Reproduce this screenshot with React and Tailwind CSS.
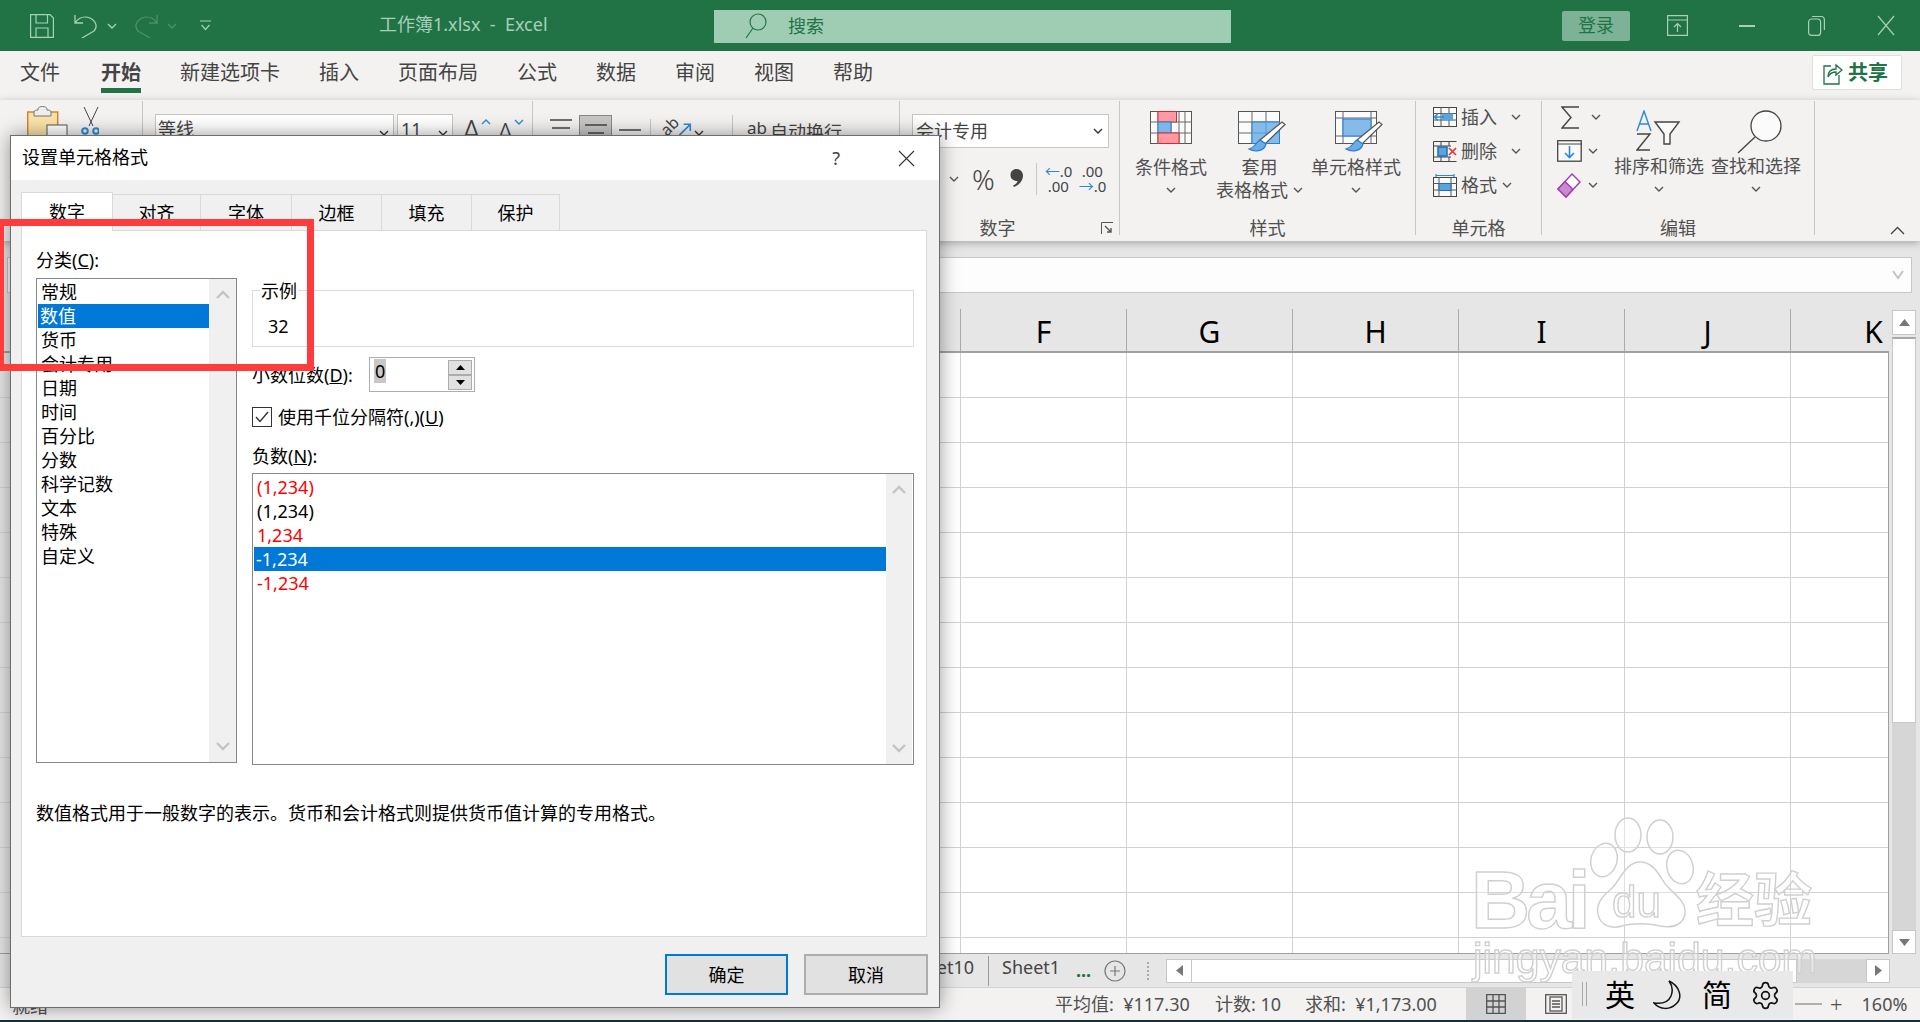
import React from "react";
import { Settings } from "lucide-react";

const Chev = ({ c = "#555", up = false, className = "" }) => (
  <svg width="10" height="6" viewBox="0 0 10 6" className={`shrink-0 ${className}`} fill="none" stroke={c} strokeWidth="1.4">
    <path d={up ? "M1 5L5 1L9 5" : "M1 1L5 5L9 1"} />
  </svg>
);

const Brush = () => (
  <g>
    <path d="M44 11L47 13.5L27 33L22 29Z" fill="#fff" stroke="#555" strokeWidth="1.2" />
    <path d="M22 29C18 31 18 36 11 38C16 41 26 41 28 33Z" fill="#6aaee3" stroke="#2b7cd3" strokeWidth="1.2" />
  </g>
);

const CondIcon = () => (
  <svg width="42" height="33" viewBox="0 0 42 33">
    <rect x="0.5" y="0.5" width="41" height="32" fill="#fbfbfb" stroke="#555" />
    <path d="M0 11H42M0 22H42M8 0V33M21 0V33M29 0V33M35 0V33" stroke="#666" />
    <rect x="8" y="0.5" width="18.5" height="10.5" fill="#ff9aa5" stroke="#d92b2b" />
    <rect x="8" y="11" width="13" height="11" fill="#7db7e8" stroke="#2b7cd3" />
    <rect x="8" y="22" width="21" height="10.5" fill="#ff9aa5" stroke="#d92b2b" />
  </svg>
);

const TableIcon = () => (
  <svg width="48" height="42" viewBox="0 0 48 42">
    <rect x="0.5" y="0.5" width="41" height="32" fill="#fbfbfb" stroke="#555" />
    <path d="M0 11H42M0 22H42M14 0V33M28 0V33" stroke="#666" />
    <rect x="14" y="11" width="27.5" height="21.5" fill="#84bbe9" stroke="#2b7cd3" />
    <path d="M28 11V33M14 22H42" stroke="#5a9bd8" />
    <Brush />
  </svg>
);

const StyleIcon = () => (
  <svg width="48" height="42" viewBox="0 0 48 42">
    <rect x="0.5" y="0.5" width="41" height="32" fill="#fbfbfb" stroke="#555" />
    <path d="M0 7H42M0 25H42M8 0V33M36 0V33" stroke="#666" />
    <rect x="8" y="8" width="28" height="17" fill="#84bbe9" stroke="#2b7cd3" />
    <Brush />
  </svg>
);

const InsertIcon = () => (
  <svg width="24" height="20" viewBox="0 0 24 20">
    <rect x="0.5" y="0.5" width="23" height="19" fill="#fafafa" stroke="#444" />
    <path d="M0 6.5H24M0 13H24M8 0V20M16 0V20" stroke="#555" />
    <rect x="9" y="6.5" width="11" height="7" fill="#5ba3dc" />
    <path d="M11 10H2M5 6.5L1.5 10L5 13.5" fill="none" stroke="#2b8ad6" strokeWidth="1.5" />
  </svg>
);

const DeleteIcon = () => (
  <svg width="24" height="21" viewBox="0 0 24 21">
    <path d="M0.5 0.5H23.5M0.5 20.5H23.5M0.5 0.5V20.5M8 0V5M16 0V5M8 16V21M16 16V21M0 5H18M0 16H18" stroke="#444" fill="none" />
    <rect x="5" y="6" width="9" height="9" fill="#5ba3dc" stroke="#1e6fb8" strokeWidth="1.5" />
    <path d="M16 7L23 14M23 7L16 14" stroke="#e8333a" strokeWidth="1.7" />
  </svg>
);

const FormatIcon = () => (
  <svg width="24" height="23" viewBox="0 0 24 23">
    <path d="M3 1.5H21M3 0V3M21 0V3" stroke="#2b8ad6" strokeWidth="1.2" />
    <rect x="0.5" y="3.5" width="23" height="19" fill="#fafafa" stroke="#444" />
    <path d="M0 9.5H24M0 16H24M6 3V23M18 3V23" stroke="#555" />
    <rect x="6" y="9.5" width="12" height="7" fill="#5ba3dc" stroke="#1e6fb8" />
  </svg>
);

const Launcher = () => (
  <svg width="13" height="13" viewBox="0 0 13 13" fill="none" stroke="#555">
    <path d="M0.5 12V0.5H12" />
    <path d="M4 4L10 10M10 6V10H6" strokeWidth="1.4" />
  </svg>
);

function TitleBar() {
  return (
    <div className="h-[51px] shrink-0 bg-[#217346] flex items-center text-[#a6d0b8] pl-[30px]">
      <svg width="24" height="24" viewBox="0 0 24 24" fill="none" stroke="#a6d0b8" strokeWidth="1.2" className="shrink-0">
        <path d="M0.6 0.6H20L23.4 4V23.4H0.6Z" />
        <path d="M6 0.6V9H17.5V0.6M6 23.4V14H18V23.4" />
      </svg>
      <svg width="24" height="24" viewBox="0 0 24 24" fill="none" stroke="#a6d0b8" strokeWidth="1.3" className="ml-[20px] shrink-0">
        <path d="M1 1V9H9M1 9C5 3 11 2 16 4C22 7 24 13 20 17L8 24" />
      </svg>
      <Chev c="#a6d0b8" className="ml-[9px]" />
      <svg width="24" height="24" viewBox="0 0 24 24" fill="none" stroke="#4f8f6b" strokeWidth="1.3" className="ml-[17px] shrink-0">
        <path d="M23 1V9H15M23 9C19 3 13 2 8 4C2 7 0 13 4 17L16 24" />
      </svg>
      <Chev c="#4f8f6b" className="ml-[9px]" />
      <svg width="11" height="11" viewBox="0 0 11 11" fill="none" stroke="#a6d0b8" strokeWidth="1.2" className="ml-[23px] shrink-0">
        <path d="M0 1H11M1.5 5L5.5 9.5L9.5 5" />
      </svg>
      <div className="ml-[168px] w-[170px] -mt-[3px] shrink-0 text-[18px] leading-[24px] whitespace-nowrap">工作簿1.xlsx&nbsp; -&nbsp; Excel</div>
      <div className="ml-[165px] w-[517px] h-[33px] mt-[1px] shrink-0 bg-[#9fcdb3] flex items-center pl-[31px] text-[#217346] text-[18px]">
        <svg width="22" height="26" viewBox="0 0 22 26" fill="none" stroke="#217346" strokeWidth="1.2">
          <circle cx="13" cy="9" r="8" />
          <path d="M8 15L1 25" />
        </svg>
        <span className="ml-[21px]">搜索</span>
      </div>
      <div className="ml-[331px] w-[68px] h-[30px] shrink-0 rounded-[2px] bg-[#7cb396] text-[#217346] text-[18px] flex items-center justify-center">登录</div>
      <svg width="21" height="21" viewBox="0 0 21 21" fill="none" stroke="#a6d0b8" strokeWidth="1.2" className="ml-[37px] shrink-0">
        <path d="M0.6 0.6H20.4V20.4H0.6ZM0.6 5H20.4M10.5 17V9M7 12L10.5 8.5L14 12" />
      </svg>
      <div className="ml-[51px] w-[16px] h-[2px] shrink-0 bg-[#a6d0b8]" />
      <svg width="17" height="21" viewBox="0 0 17 21" fill="none" stroke="#a6d0b8" strokeWidth="1.2" className="ml-[53px] shrink-0">
        <rect x="0.6" y="4" width="12" height="16.4" rx="3" />
        <path d="M4 1.5H13C15 1.5 16.4 3 16.4 5V15" />
      </svg>
      <svg width="18" height="21" viewBox="0 0 18 21" fill="none" stroke="#a6d0b8" strokeWidth="1.2" className="ml-[52px] shrink-0">
        <path d="M1 1L17 20M17 1L1 20" />
      </svg>
    </div>
  );
}

function TabRow() {
  return (
    <div className="h-[49px] shrink-0 bg-[#f3f2f1] flex text-[20px] leading-[24px] text-[#444] pl-[20px]">
      <div className="mt-[10px]">文件</div>
      <div className="mt-[10px] ml-[41px] flex flex-col font-bold">
        <span>开始</span>
        <span className="block mt-[3px] h-[5px] bg-[#217346]" />
      </div>
      <div className="mt-[10px] ml-[39px]">新建选项卡</div>
      <div className="mt-[10px] ml-[39px]">插入</div>
      <div className="mt-[10px] ml-[39px]">页面布局</div>
      <div className="mt-[10px] ml-[39px]">公式</div>
      <div className="mt-[10px] ml-[39px]">数据</div>
      <div className="mt-[10px] ml-[39px]">审阅</div>
      <div className="mt-[10px] ml-[39px]">视图</div>
      <div className="mt-[10px] ml-[39px]">帮助</div>
      <div className="ml-auto mr-[18px] mt-[4px] w-[90px] h-[35px] bg-white border border-[#e1dfdd] rounded-[2px] flex items-center pl-[10px] text-[#217346] font-bold">
        <svg width="20" height="24" viewBox="0 0 20 24" fill="none" stroke="#217346" strokeWidth="1.3">
          <path d="M8 5H1V23H16V14" />
          <path d="M5 16C5 10 9 8 13 8V4L19 9L13 14V11C10 11 7 12 5 16Z" />
        </svg>
        <span className="ml-[5px]">共享</span>
      </div>
    </div>
  );
}

const BigBtn = ({ icon, lines, w, chevInline }) => (
  <div className={`${w} flex flex-col items-center pt-[10px] text-[18px] text-[#505050] shrink-0`}>
    <div className="h-[44px]">{icon}</div>
    <div className="h-[24px] leading-[24px] whitespace-nowrap">{lines}</div>
    {chevInline ? (
      <div className="h-[22px] leading-[22px] flex items-center whitespace-nowrap">
        {chevInline}
        <Chev className="ml-[5px]" />
      </div>
    ) : (
      <div className="h-[22px] flex items-center">
        <Chev />
      </div>
    )}
  </div>
);

const GroupLabel = ({ children }) => (
  <div className="h-[28px] shrink-0 leading-[28px] text-[18px] text-[#505050] text-center whitespace-nowrap">{children}</div>
);

const CellRow = ({ icon, text, chevClass }) => (
  <div className="h-[34px] flex items-center text-[18px] text-[#505050]">
    <div className="w-[24px] flex justify-center shrink-0">{icon}</div>
    <span className="ml-[4px]">{text}</span>
    <Chev className={chevClass} />
  </div>
);

function Ribbon() {
  return (
    <div className="h-[141px] shrink-0 bg-[#f3f2f1] flex relative z-10 shadow-[0_2px_8px_rgba(0,0,0,0.28)] pt-[1px]">
      {/* clipboard */}
      <div className="w-[143px] h-[134px] border-r border-[#c8c6c4] shrink-0 flex items-start pt-[5px] pl-[27px]">
        <svg width="72" height="40" viewBox="0 0 72 40" fill="none">
          <rect x="0.7" y="6" width="30" height="32" fill="#fbe3a8" stroke="#d9822b" strokeWidth="1.5" />
          <path d="M7 6C7 4 10 4 11 4C11 1 13 0.5 15.5 0.5C18 0.5 20 1 20 4C21 4 24 4 24 6V10H7Z" fill="#eee" stroke="#777" />
          <rect x="20" y="19" width="20" height="20" fill="#fff" stroke="#555" />
          <path d="M57 1L66 20M71 1L62 20" stroke="#444" />
          <circle cx="58" cy="25" r="2.8" stroke="#2b8ad6" strokeWidth="2" />
          <circle cx="69" cy="25" r="2.8" stroke="#2b8ad6" strokeWidth="2" />
        </svg>
      </div>
      {/* font */}
      <div className="w-[390px] h-[134px] border-r border-[#c8c6c4] shrink-0 flex items-start pt-[13px] pl-[12px] text-[18px] text-[#444]">
        <div className="w-[239px] h-[34px] bg-white border border-[#c8c6c4] flex items-start justify-between pl-[2px] pr-[4px] pt-[2px] leading-[24px]">
          <span>等线</span>
          <Chev c="#333" className="mt-[13px]" />
        </div>
        <div className="ml-[3px] w-[56px] h-[34px] bg-white border border-[#c8c6c4] flex items-start justify-between pl-[3px] pr-[4px] pt-[2px] leading-[24px]">
          <span>11</span>
          <Chev c="#333" className="mt-[13px]" />
        </div>
        <div className="ml-[8px] flex items-start text-[34px] leading-[36px] font-light">
          <span>A</span>
          <Chev c="#2b8ad6" up className="mt-[5px] -ml-[1px]" />
          <span className="ml-[6px] text-[28px]">A</span>
          <Chev c="#2b8ad6" className="mt-[5px]" />
        </div>
      </div>
      {/* align */}
      <div className="w-[367px] h-[134px] border-r border-[#c8c6c4] shrink-0 flex items-start pl-[16px] pt-[14px]">
        <svg width="24" height="24" viewBox="0 0 24 24" stroke="#444" strokeWidth="1.5" className="mt-[4px] shrink-0">
          <path d="M1 1H23M3 9H21M1 17H23" />
        </svg>
        <div className="ml-[6px] w-[33px] h-[30px] shrink-0 bg-[#c8c6c4] border border-[#8a8886] flex justify-center pt-[8px]">
          <svg width="22" height="16" viewBox="0 0 22 16" stroke="#444" strokeWidth="1.5">
            <path d="M0 1H22M3 9H19" />
          </svg>
        </div>
        <svg width="24" height="24" viewBox="0 0 24 24" stroke="#444" strokeWidth="1.5" className="ml-[6px] mt-[10px] shrink-0">
          <path d="M1 5H23" />
        </svg>
        <div className="ml-[8px] mt-[4px] h-[30px] border-l border-[#c8c6c4]" />
        <div className="ml-[9px] mt-[1px] w-[32px] h-[24px] flex items-start shrink-0">
          <span className="inline-block text-[16px] leading-[20px] text-[#444] -rotate-45 origin-center">ab</span>
          <svg width="16" height="16" viewBox="0 0 16 16" fill="none" stroke="#2b8ad6" strokeWidth="1.7" className="ml-[-2px] mt-[6px]">
            <path d="M1 15L14 2M7 2H14V9" />
          </svg>
        </div>
        <Chev c="#333" className="ml-[2px] mt-[15px]" />
        <div className="ml-[28px] h-[34px] border-l border-[#c8c6c4]" />
        <div className="ml-[14px] flex items-start text-[18px] leading-[24px] text-[#444] mt-[5px]">
          <span className="leading-[18px] text-[17px] -mt-[1px]">ab</span>
          <span className="ml-[3px]">自动换行</span>
        </div>
      </div>
      {/* number */}
      <div className="w-[220px] h-[134px] border-r border-[#c8c6c4] shrink-0 flex flex-col">
        <div className="h-[113px] shrink-0 flex flex-col pl-[12px] pt-[13px]">
          <div className="w-[197px] h-[34px] bg-white border border-[#c8c6c4] flex items-center justify-between pl-[3px] pr-[5px] text-[18px] text-[#444]">
            <span>会计专用</span>
            <Chev c="#333" />
          </div>
          <div className="flex items-center h-[32px] mt-[15px] text-[#444]">
            <Chev className="ml-[37px]" />
            <span className="ml-[13px] text-[28px] leading-[32px] font-light">%</span>
            <svg width="13" height="18" viewBox="0 0 13 18" fill="#444" className="ml-[15px] -mt-[3px] shrink-0">
              <path d="M6.5 0C10.5 0 13 3 13 6.5C13 12 9 16 4 18L3 16.5C6 15 7.5 13.5 7.5 12C3 12 0.5 9.5 0.5 6C0.5 2.5 3 0 6.5 0Z" />
            </svg>
            <span className="ml-[13px] h-[32px] border-l border-[#c8c6c4]" />
            <div className="ml-[8px] w-[25px] text-[15px] leading-[15px] whitespace-nowrap">
              <div><span className="text-[#2b8ad6]">←</span>.0</div>
              <div className="pl-[3px]">.00</div>
            </div>
            <div className="ml-[9px] w-[25px] text-[15px] leading-[15px] whitespace-nowrap">
              <div className="pl-[3px]">.00</div>
              <div><span className="text-[#2b8ad6]">→</span>.0</div>
            </div>
          </div>
        </div>
        <div className="flex items-center">
          <div className="w-[195px]"><GroupLabel>数字</GroupLabel></div>
          <div className="ml-[6px]"><Launcher /></div>
        </div>
      </div>
      {/* styles */}
      <div className="w-[296px] h-[134px] border-r border-[#c8c6c4] shrink-0 flex flex-col">
        <div className="h-[113px] shrink-0 flex pl-[11px]">
          <BigBtn w="w-[80px]" icon={<CondIcon />} lines="条件格式" />
          <BigBtn w="w-[97px]" icon={<div className="ml-[5px]"><TableIcon /></div>} lines="套用" chevInline="表格格式" />
          <BigBtn w="w-[96px]" icon={<div className="ml-[5px]"><StyleIcon /></div>} lines="单元格样式" />
        </div>
        <GroupLabel>样式</GroupLabel>
      </div>
      {/* cells */}
      <div className="w-[126px] h-[134px] border-r border-[#c8c6c4] shrink-0 flex flex-col">
        <div className="h-[113px] shrink-0 pl-[17px] flex flex-col -mt-[1px]">
          <CellRow icon={<InsertIcon />} text="插入" chevClass="ml-[14px]" />
          <CellRow icon={<DeleteIcon />} text="删除" chevClass="ml-[14px]" />
          <CellRow icon={<FormatIcon />} text="格式" chevClass="ml-[5px]" />
        </div>
        <div className="mt-[1px]"><GroupLabel>单元格</GroupLabel></div>
      </div>
      {/* editing */}
      <div className="w-[273px] h-[134px] border-r border-[#c8c6c4] shrink-0 flex flex-col">
        <div className="h-[113px] shrink-0 flex pl-[15px]">
          <div className="w-[56px] flex flex-col shrink-0 -mt-[1px]">
            <div className="h-[34px] flex items-center pl-[4px]">
              <svg width="19" height="23" viewBox="0 0 19 23" fill="none" stroke="#444" strokeWidth="1.4">
                <path d="M18 1H1L10 11.5L1 22H18" />
              </svg>
              <Chev className="ml-[11px]" />
            </div>
            <div className="h-[34px] flex items-center">
              <svg width="25" height="22" viewBox="0 0 25 22" fill="none">
                <rect x="0.7" y="0.7" width="23.5" height="20.5" fill="#fafafa" stroke="#444" strokeWidth="1.3" />
                <path d="M0 4H25" stroke="#444" />
                <path d="M12.5 6V17M8 13L12.5 17.5L17 13" stroke="#2b8ad6" strokeWidth="1.6" />
              </svg>
              <Chev className="ml-[6px]" />
            </div>
            <div className="h-[34px] flex items-center">
              <svg width="24" height="25" viewBox="0 0 24 25" fill="none" stroke="#a03cb0" strokeWidth="1.4">
                <path d="M15 1L23 9L9 24L1 16Z" fill="#fff" />
                <path d="M8 8.5L16 16.5L9 24L1 16Z" fill="#c98ad2" />
              </svg>
              <Chev className="ml-[7px]" />
            </div>
          </div>
          <BigBtn
            w="w-[92px] -mt-[1px]"
            icon={
              <svg width="46" height="42" viewBox="0 0 46 42" fill="none">
                <path d="M1 21L8 1L15 21M3.5 14H12.5" stroke="#2b8ad6" strokeWidth="1.4" />
                <path d="M1 24H14L1 40H14" stroke="#444" strokeWidth="1.4" />
                <path d="M19 12H43L34 24V34H28V24Z" fill="#fafafa" stroke="#444" strokeWidth="1.4" />
              </svg>
            }
            lines="排序和筛选"
          />
          <BigBtn
            w="w-[96px] ml-[3px] -mt-[1px]"
            icon={
              <svg width="46" height="44" viewBox="0 0 46 44" fill="none" stroke="#444" strokeWidth="1.3" className="ml-[8px]">
                <circle cx="29" cy="16" r="15" fill="#fbfbfb" />
                <path d="M18 27L1 43" />
              </svg>
            }
            lines="查找和选择"
          />
        </div>
        <GroupLabel>编辑</GroupLabel>
      </div>
      <div className="flex-1 flex justify-end items-end pr-[15px] pb-[6px]">
        <svg width="15" height="9" viewBox="0 0 15 9" fill="none" stroke="#444" strokeWidth="1.3">
          <path d="M1 8L7.5 1.5L14 8" />
        </svg>
      </div>
    </div>
  );
}

const cols = ["A", "B", "C", "D", "E", "F", "G", "H", "I", "J", "K"];
const rows = Array.from({ length: 14 }, (_, i) => i);

function Grid() {
  return (
    <div className="flex h-[645px] shrink-0">
      <div className="w-[1889px] flex flex-col overflow-hidden shrink-0 border-b border-[#a0a0a0]">
        <div className="flex h-[44px] shrink-0 border-b-2 border-[#a0a0a0]">
          <div className="w-[131px] shrink-0" />
          {cols.map((c) => (
            <div key={c} className="w-[166px] shrink-0 border-r border-[#ababab] flex items-center justify-center text-[30px] leading-[40px] text-black pt-[3px]">
              {c}
            </div>
          ))}
        </div>
        <div className="flex-1 bg-white flex flex-col overflow-hidden border-r border-[#a0a0a0]">
          {rows.map((r) => (
            <div key={r} className="flex h-[45px] shrink-0 border-b border-[#d2d2d2]">
              <div className="w-[131px] shrink-0 bg-[#e6e6e6]" />
              {cols.map((c) => (
                <div key={c} className="w-[166px] shrink-0 border-r border-[#d2d2d2]" />
              ))}
            </div>
          ))}
        </div>
      </div>
      <div className="w-[31px] flex flex-col shrink-0 pl-[3px] pr-[4px] pt-[1px]">
        <div className="h-[25px] bg-white border border-[#c8c8c8] flex items-center justify-center shrink-0">
          <svg width="11" height="7" viewBox="0 0 11 7" fill="#777"><path d="M5.5 0L11 7H0Z" /></svg>
        </div>
        <div className="h-[386px] mt-[2px] bg-white border border-[#c8c8c8] border-t-[#a8a8a8] border-t-2 shrink-0" />
        <div className="flex-1 bg-[#d6d6d6]" />
        <div className="h-[24px] bg-white border border-[#c8c8c8] flex items-center justify-center shrink-0">
          <svg width="11" height="7" viewBox="0 0 11 7" fill="#777"><path d="M5.5 7L11 0H0Z" /></svg>
        </div>
      </div>
    </div>
  );
}

function SheetRow() {
  return (
    <div className="h-[33px] shrink-0 flex items-center text-[18px] text-[#444] leading-[24px]">
      <div className="w-[988px] shrink-0 flex justify-end pr-[14px] whitespace-nowrap -mt-[8px]">Sheet10</div>
      <div className="h-[30px] border-l border-[#999] shrink-0" />
      <div className="ml-[13px] w-[64px] whitespace-nowrap -mt-[8px]">Sheet1</div>
      <div className="ml-[10px] w-[26px] text-[#217346] font-bold leading-[24px] -mt-[2px]">...</div>
      <svg width="22" height="22" viewBox="0 0 22 22" fill="none" stroke="#777" strokeWidth="1.2" className="ml-[2px] shrink-0">
        <circle cx="11" cy="11" r="10" />
        <path d="M11 6V16M6 11H16" />
      </svg>
      <div className="ml-[21px] w-[2px] h-[18px] border-l-2 border-dotted border-[#aaa]" />
      <div className="ml-[17px] flex h-[24px] w-[724px] shrink-0">
        <div className="w-[26px] bg-white border border-[#c8c8c8] flex items-center justify-center">
          <svg width="7" height="11" viewBox="0 0 7 11" fill="#777"><path d="M0 5.5L7 0V11Z" /></svg>
        </div>
        <div className="w-[605px] bg-white border-y border-r border-[#c8c8c8]" />
        <div className="flex-1 bg-[#d6d6d6]" />
        <div className="w-[24px] bg-white border border-[#c8c8c8] flex items-center justify-center">
          <svg width="7" height="11" viewBox="0 0 7 11" fill="#777"><path d="M7 5.5L0 0V11Z" /></svg>
        </div>
      </div>
    </div>
  );
}

function StatusBar() {
  return (
    <div className="h-[33px] shrink-0 bg-[#f3f2f1] border-t border-[#d2d2d2] flex items-center text-[18px] text-[#505050] leading-[24px] pl-[12px]">
      <span className="w-[40px] mt-[3px]">就绪</span>
      <span className="ml-[1003px] whitespace-nowrap w-[138px]">平均值:&nbsp; ¥117.30</span>
      <span className="ml-[22px] whitespace-nowrap w-[67px]">计数: 10</span>
      <span className="ml-[23px] whitespace-nowrap w-[135px]">求和:&nbsp; ¥1,173.00</span>
      <div className="ml-[26px] w-[60px] h-full bg-[#d2d2d2] flex items-center justify-center">
        <svg width="20" height="20" viewBox="0 0 20 20" fill="none" stroke="#555" strokeWidth="1.3">
          <path d="M0.7 0.7H19.3V19.3H0.7ZM7 0V20M13 0V20M0 7H20M0 13H20" />
        </svg>
      </div>
      <svg width="22" height="20" viewBox="0 0 22 20" fill="none" stroke="#555" strokeWidth="1.3" className="ml-[19px]">
        <rect x="0.7" y="0.7" width="20.6" height="18.6" />
        <rect x="5" y="3" width="12" height="14" />
        <path d="M7 7H15M7 10H15M7 13H15" />
      </svg>
      <div className="ml-[228px] w-[27px] h-[2px] bg-[#b0b0b0]" />
      <span className="ml-[8px] text-[22px] leading-[24px] font-light">+</span>
      <span className="ml-[19px] whitespace-nowrap">160%</span>
    </div>
  );
}

const ListItem = ({ children, selected, className = "" }) => (
  <div className={`h-[24px] leading-[24px] text-[18px] whitespace-nowrap ${selected ? "bg-[#0078d7] text-white pl-[2px]" : `pl-[3px] ${className || "text-black"}`}`}>
    {children}
  </div>
);

const ScrollCol = ({ w }) => (
  <div className={`${w} h-full bg-[#f0f0f0] flex flex-col items-center justify-between py-[11px] shrink-0`}>
    <svg width="14" height="9" viewBox="0 0 14 9" fill="none" stroke="#c4c4c4" strokeWidth="2.4"><path d="M1 8L7 2L13 8" /></svg>
    <svg width="14" height="9" viewBox="0 0 14 9" fill="none" stroke="#c4c4c4" strokeWidth="2.4"><path d="M1 1L7 7L13 1" /></svg>
  </div>
);

function Dialog() {
  const tabs = ["对齐", "字体", "边框", "填充", "保护"];
  const widths = ["w-[88px]", "w-[91px]", "w-[90px]", "w-[90px]", "w-[88px]"];
  const cats = ["常规", "数值", "货币", "会计专用", "日期", "时间", "百分比", "分数", "科学记数", "文本", "特殊", "自定义"];
  return (
    <div className="absolute left-[10px] top-[135px] w-[930px] h-[873px] z-20 bg-[#f0f0f0] border border-[#6d6d6d] shadow-[0_0_18px_rgba(0,0,0,0.4)] flex flex-col text-black text-[18px] leading-[24px]">
      <div className="h-[44px] bg-white shrink-0 flex items-center pl-[11px] pr-[24px]">
        <span className="-mt-[2px]">设置单元格格式</span>
        <span className="ml-auto text-[#444]">?</span>
        <svg width="17" height="17" viewBox="0 0 17 17" fill="none" stroke="#333" strokeWidth="1.1" className="ml-[58px]">
          <path d="M1 1L16 16M16 1L1 16" />
        </svg>
      </div>
      <div className="pl-[10px] pt-[12px] h-[50px] shrink-0 flex items-start relative z-10">
        <div className="w-[92px] h-[39px] bg-white border-x border-t border-[#d9d9d9] flex items-center justify-center">数字</div>
        {tabs.map((t, i) => (
          <div key={t} className={`${widths[i]} h-[36px] mt-[2px] bg-[#f0f0f0] border-r border-t border-[#d9d9d9] flex items-center justify-center`}>{t}</div>
        ))}
      </div>
      <div className="ml-[10px] w-[906px] h-[707px] bg-white border border-[#d9d9d9] shrink-0 pl-[14px] pt-[18px]">
        <div className="flex items-start">
          <div className="w-[201px] shrink-0 flex flex-col">
            <div className="h-[24px] -mt-[1px] mb-[1px]">分类(<u>C</u>):</div>
            <div className="h-[485px] mt-[5px] border border-[#828790] flex pl-[1px]">
              <div className="w-[171px] shrink-0 pt-[1px]">
                {cats.map((c) => (
                  <ListItem key={c} selected={c === "数值"}>{c}</ListItem>
                ))}
              </div>
              <ScrollCol w="w-[27px]" />
            </div>
          </div>
          <div className="ml-[15px] w-[662px] shrink-0 pt-[41px]">
            <div className="relative h-[57px] border border-[#dcdcdc] pl-[15px] pt-[23px]">
              <span className="absolute left-[7px] -top-[12px] bg-white px-[1px]">示例</span>
              32
            </div>
            <div className="mt-[10px] flex items-center h-[35px]">
              <span className="w-[117px] whitespace-nowrap">小数位数(<u>D</u>):</span>
              <div className="w-[106px] h-[35px] border border-[#adadad] flex items-start justify-between pl-[4px] pt-[1px] pr-[2px]">
                <span className="bg-[#c8c8c8] px-[1px] h-[24px]">0</span>
                <div className="w-[24px] flex flex-col mt-[1px]">
                  <div className="h-[15px] bg-[#e1e1e1] border border-[#adadad] flex items-center justify-center">
                    <svg width="9" height="5" viewBox="0 0 9 5" fill="#000"><path d="M4.5 0L9 5H0Z" /></svg>
                  </div>
                  <div className="h-[15px] bg-[#e1e1e1] border border-[#adadad] flex items-center justify-center">
                    <svg width="9" height="5" viewBox="0 0 9 5" fill="#000"><path d="M4.5 5L9 0H0Z" /></svg>
                  </div>
                </div>
              </div>
            </div>
            <div className="mt-[15px] flex items-center h-[20px]">
              <div className="w-[20px] h-[20px] border border-[#333] flex items-center justify-center shrink-0">
                <svg width="14" height="12" viewBox="0 0 14 12" fill="none" stroke="#333" strokeWidth="1.4"><path d="M1 6L5 10.5L13 1" /></svg>
              </div>
              <span className="ml-[6px] whitespace-nowrap">使用千位分隔符(,)(<u>U</u>)</span>
            </div>
            <div className="mt-[17px] h-[24px]">负数(<u>N</u>):</div>
            <div className="mt-[5px] h-[292px] border border-[#828790] flex pl-[1px]">
              <div className="w-[632px] shrink-0 pt-[1px]">
                <ListItem className="text-[#ff0000]">(1,234)</ListItem>
                <ListItem>(1,234)</ListItem>
                <ListItem className="text-[#ff0000]">1,234</ListItem>
                <ListItem selected>-1,234</ListItem>
                <ListItem className="text-[#ff0000]">-1,234</ListItem>
              </div>
              <ScrollCol w="w-[26px]" />
            </div>
          </div>
        </div>
        <div className="mt-[36px] h-[24px] whitespace-nowrap">数值格式用于一般数字的表示。货币和会计格式则提供货币值计算的专用格式。</div>
      </div>
      <div className="flex justify-end gap-[16px] mt-[17px] pr-[11px]">
        <div className="w-[123px] h-[41px] bg-[#e1e1e1] border-2 border-[#0078d7] flex items-center justify-center">确定</div>
        <div className="w-[124px] h-[41px] bg-[#e1e1e1] border-2 border-[#adadad] flex items-center justify-center">取消</div>
      </div>
    </div>
  );
}

function Watermark() {
  const stroke = "text-[rgba(255,255,255,0.35)] [-webkit-text-stroke:1.4px_#d0d0d0] blur-[0.4px]";
  return (
    <div className="absolute left-[1470px] top-[810px] w-[350px] h-[175px] z-30 pointer-events-none [font-family:'Liberation_Sans',sans-serif]">
      <svg width="350" height="175" viewBox="0 0 350 175" fill="rgba(255,255,255,0.35)" stroke="#d0d0d0" strokeWidth="1.5" className="blur-[0.4px]">
        <ellipse cx="158" cy="25" rx="13" ry="17" />
        <ellipse cx="190" cy="27" rx="13" ry="17" />
        <ellipse cx="134" cy="50" rx="13" ry="17" transform="rotate(15 134 50)" />
        <ellipse cx="210" cy="57" rx="13" ry="17" transform="rotate(-15 210 57)" />
        <path d="M170 52C155 52 150 72 140 80C130 88 126 95 128 104C130 116 142 119 152 116C162 113 178 113 190 116C205 119 216 113 215 100C214 90 205 85 197 76C190 68 185 52 170 52Z" />
      </svg>
      <span className={`absolute left-[1px] top-[44px] text-[82px] leading-[92px] font-bold tracking-[-4px] ${stroke}`}>Bai</span>
      <span className={`absolute left-[142px] top-[67px] text-[44px] leading-[50px] ${stroke}`}>du</span>
      <span className={`absolute left-[226px] top-[46px] text-[58px] leading-[80px] whitespace-nowrap font-bold [font-family:'Noto_Sans_CJK_SC',sans-serif] ${stroke}`}>经验</span>
      <span className={`absolute left-[3px] top-[123px] text-[42.7px] leading-[50px] whitespace-nowrap ${stroke}`}>jingyan.baidu.com</span>
    </div>
  );
}

function Ime() {
  return (
    <div className="absolute left-[1572px] top-[971px] w-[221px] h-[48px] z-40 bg-[#e9e9e9] flex items-center text-black text-[30px] leading-[40px] pl-[10px]">
      <div className="w-[5px] h-[24px] border-x border-[#a8a8a8] -mt-[2px]" />
      <span className="ml-[18px]">英</span>
      <svg width="30" height="30" viewBox="0 0 30 30" fill="none" stroke="#111" strokeWidth="1.5" className="ml-[18px]">
        <path d="M16 1C27 6 30 18 23 24C17 30 7 30 1 23C8 24 15 23 18 16C20 11 19 5 16 1Z" />
      </svg>
      <span className="ml-[19px]">简</span>
      <Settings size={31} strokeWidth={1.3} color="#111" className="ml-[18px]" />
    </div>
  );
}

export default function App() {
  return (
    <div className="relative w-[1920px] h-[1022px] overflow-hidden flex flex-col bg-[#e6e6e6] [font-family:'Noto_Sans','Noto_Sans_CJK_SC',sans-serif]">
      <TitleBar />
      <TabRow />
      <Ribbon />
      <div className="flex-1 flex flex-col pt-[16px]">
        <div className="ml-[7px] w-[1905px] h-[36px] shrink-0 bg-[#fdfdfd] border border-[#c8c8c8] flex items-center justify-end pr-[7px]">
          <svg width="12" height="10" viewBox="0 0 12 10" fill="none" stroke="#c4c4c4" strokeWidth="2"><path d="M1 1L6 8L11 1" /></svg>
        </div>
        <div className="h-[16px] shrink-0" />
        <Grid />
        <SheetRow />
      </div>
      <StatusBar />
      <div className="h-[2px] shrink-0 bg-[#12303f]" />
      <Dialog />
      <div className="absolute -left-[3px] top-[219px] w-[317px] h-[152px] border-[7px] border-[#ff3b3b] z-30 pointer-events-none" />
      <Watermark />
      <Ime />
    </div>
  );
}
